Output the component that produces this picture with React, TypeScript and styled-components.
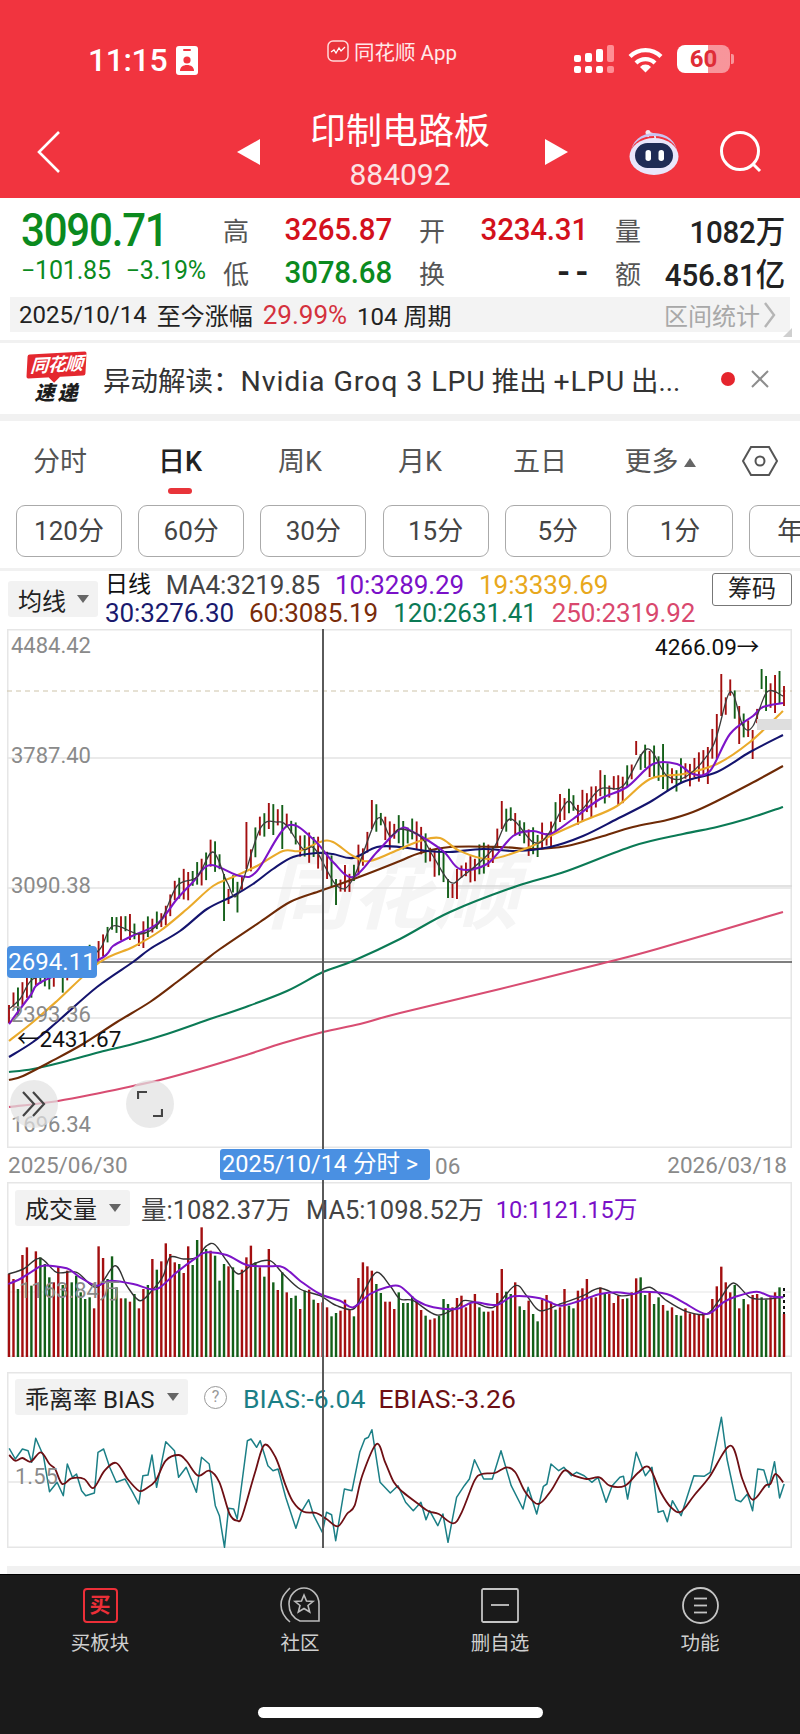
import React from "react";
import styled, { createGlobalStyle } from "styled-components";

const sans = `Roboto, "Noto Sans CJK SC", sans-serif`;
const red = "#d3111c";
const green = "#0b8a1e";

const GlobalStyle = createGlobalStyle`
  html, body { margin: 0; padding: 0; background: #fff; }
  * { box-sizing: border-box; }
  body { font-family: ${sans}; }
`;

const Page = styled.div`
  width: 800px;
  height: 1734px;
  overflow: hidden;
  display: flex;
  flex-direction: column;
  background: #fff;
`;

/* header */
const Header = styled.header`
  height: 198px;
  background: #f1343f;
  color: #fff;
`;
const StatusRow = styled.div`
  height: 105px;
  display: grid;
  grid-template-columns: 239px 132px 1fr;
  padding: 0 67px 0 88px;
`;
const StatusLeft = styled.div`
  display: flex;
  align-items: center;
  gap: 9px;
  height: 30px;
  margin-top: 45px;
`;
const Clock = styled.span`
  font-size: 32px;
  font-weight: 500;
  letter-spacing: -0.4px;
`;
const AppTag = styled.div`
  display: flex;
  align-items: center;
  gap: 5px;
  height: 24px;
  margin-top: 39px;
  font-size: 20.5px;
  white-space: nowrap;
  color: #ffe9ea;
`;
const StatusRight = styled.div`
  display: flex;
  align-items: center;
  justify-content: flex-end;
  gap: 14px;
  height: 30px;
  margin-top: 44px;
`;
const Battery = styled.div`
  position: relative;
  width: 53px;
  height: 28px;
  border-radius: 8px;
  background: linear-gradient(90deg, #fff 0 58%, rgba(255, 255, 255, 0.48) 58%);
  color: #df2c36;
  font-size: 24px;
  font-weight: 700;
  line-height: 28px;
  text-align: center;
  margin-right: 3px;
  &::after {
    content: "";
    position: absolute;
    right: -4px;
    top: 9px;
    width: 3px;
    height: 10px;
    border-radius: 0 2px 2px 0;
    background: rgba(255, 255, 255, 0.48);
  }
`;
const NavRow = styled.div`
  height: 93px;
  display: grid;
  grid-template-columns: 237px 23px 1fr 23px 232px;
  align-items: center;
`;
const BackCell = styled.div`
  padding-left: 37px;
  display: flex;
`;
const TitleBlock = styled.div`
  display: flex;
  flex-direction: column;
  align-items: center;
  margin-top: -2px;
  margin-right: 5px;
`;
const Title = styled.div`
  font-size: 36px;
  line-height: 46px;
  white-space: nowrap;
`;
const Code = styled.div`
  margin-top: 3px;
  font-size: 30px;
  line-height: 34px;
  color: #fbe3e4;
`;
const NavActions = styled.div`
  display: flex;
  align-items: center;
  gap: 41px;
  padding-left: 61px;
`;

/* quote */
const Quote = styled.section`
  height: 142px;
  display: flex;
  flex-direction: column;
`;
const QuoteTop = styled.div`
  height: 99px;
  display: flex;
`;
const PriceCol = styled.div`
  width: 223px;
  padding: 9px 0 0 21px;
  color: ${green};
`;
const Price = styled.div`
  font-size: 42px;
  line-height: 48px;
  font-weight: 500;
  letter-spacing: -1.2px;
  transform: scaleY(1.08);
`;
const Change = styled.div`
  display: flex;
  gap: 15px;
  margin-top: 2px;
  font-size: 25px;
  line-height: 28px;
  letter-spacing: -0.2px;
  white-space: nowrap;
`;
const StatGrid = styled.div`
  display: grid;
  grid-template-columns: 169px 169px 170px;
  grid-auto-rows: 28px;
  column-gap: 27px;
  row-gap: 15px;
  padding-top: 17px;
`;
const Stat = styled.div`
  display: flex;
  justify-content: space-between;
  align-items: center;
`;
const StatLabel = styled.span`
  font-size: 26px;
  color: #555;
`;
const StatValue = styled.span<{ $color: string; $spaced?: boolean }>`
  font-size: ${(p) => (p.$spaced ? "36px" : "29.5px")};
  font-weight: 500;
  color: ${(p) => p.$color};
  letter-spacing: ${(p) => (p.$spaced ? "6px" : "-0.2px")};
  margin-right: ${(p) => (p.$spaced ? "-6px" : "0")};
  transform: scaleY(1.08);
  white-space: nowrap;
`;
const RangeBar = styled.div`
  position: relative;
  height: 35px;
  margin: 0 10px;
  background: #f3f3f3;
  display: flex;
  align-items: center;
  gap: 10px;
  padding: 0 14px 0 9px;
  font-size: 24px;
  color: #222;
  white-space: nowrap;
`;
const RangePct = styled.span`
  color: #d4313d;
  font-size: 26px;
`;
const RangeStats = styled.span`
  margin-left: auto;
  display: flex;
  align-items: center;
  gap: 4px;
  color: #a8a8a8;
`;
const CornerMark = styled.div`
  position: absolute;
  right: -2px;
  bottom: -5px;
  width: 0;
  height: 0;
  border-left: 9px solid transparent;
  border-bottom: 9px solid #cfcfcf;
`;
const ThinGap = styled.div<{ $h: number; $bg: string }>`
  height: ${(p) => p.$h}px;
  background: ${(p) => p.$bg};
`;

/* news */
const News = styled.div`
  height: 71px;
  display: flex;
  align-items: center;
  padding-left: 26px;
`;
const Logo = styled.div`
  width: 60px;
  display: flex;
  flex-direction: column;
  align-items: center;
`;
const LogoTop = styled.div`
  position: relative;
  width: 59px;
  height: 24px;
  border-radius: 2px;
  background: #e4282f;
  transform: rotate(-3deg) skewX(-6deg);
  color: #fff;
  font-size: 18px;
  line-height: 24px;
  font-weight: 700;
  font-style: italic;
  text-align: center;
  letter-spacing: -0.5px;
  white-space: nowrap;
  &::after {
    content: "";
    position: absolute;
    left: 24px;
    bottom: -4px;
    width: 8px;
    height: 8px;
    background: #e4282f;
    transform: rotate(45deg);
  }
`;
const LogoBottom = styled.div`
  margin-top: 6px;
  font-size: 20px;
  line-height: 21px;
  font-weight: 900;
  font-style: italic;
  letter-spacing: 3px;
  margin-right: -3px;
  color: #1c1c1c;
`;
const NewsText = styled.div`
  width: 617px;
  margin-left: 17px;
  font-size: 27.5px;
  color: #333;
  white-space: nowrap;
  overflow: hidden;
`;
const Latin = styled.span`
  font-size: 28.5px;
  letter-spacing: 0.9px;
  margin-right: 6px;
`;
const Dot = styled.div`
  width: 14px;
  height: 14px;
  border-radius: 50%;
  background: #e5252d;
  margin-left: 1px;
`;
const Close = styled.div`
  margin-left: 16px;
  display: flex;
`;

/* tabs */
const Tabs = styled.div`
  height: 84px;
  display: grid;
  grid-template-columns: repeat(6, 120px) 1fr;
  padding-top: 25px;
`;
const Tab = styled.div<{ $active?: boolean }>`
  position: relative;
  display: flex;
  justify-content: center;
  gap: 5px;
  height: 32px;
  font-size: 27px;
  line-height: 32px;
  color: ${(p) => (p.$active ? "#222" : "#555")};
  font-weight: ${(p) => (p.$active ? 500 : 400)};
`;
const TabMark = styled.div`
  position: absolute;
  left: 48px;
  top: 42px;
  width: 24px;
  height: 6px;
  border-radius: 3px;
  background: #e8343a;
`;
const MoreCaret = styled.span`
  align-self: center;
  width: 0;
  height: 0;
  border-left: 6px solid transparent;
  border-right: 6px solid transparent;
  border-bottom: 9px solid #666;
`;
const SettingCell = styled.div`
  display: flex;
  padding-left: 22px;
`;
const Pills = styled.div`
  height: 52px;
  display: flex;
  gap: 16.2px;
  padding-left: 16px;
  overflow: hidden;
`;
const Pill = styled.div`
  flex: 0 0 106px;
  border: 1px solid #aaa;
  border-radius: 9px;
  font-size: 26px;
  line-height: 50px;
  text-align: center;
  color: #444;
`;
const EdgePill = styled(Pill)`
  text-align: left;
  padding-left: 27px;
`;

/* legend */
const Legend = styled.div`
  height: 58px;
  display: flex;
`;
const Selector = styled.div<{ $w: number }>`
  width: ${(p) => p.$w}px;
  height: 36px;
  display: flex;
  align-items: center;
  justify-content: space-between;
  padding: 0 9px 0 10px;
  background: #f2f2f2;
  border-radius: 3px;
  font-size: 24px;
  color: #222;
  white-space: nowrap;
`;
const Caret = styled.span`
  width: 0;
  height: 0;
  border-left: 6px solid transparent;
  border-right: 6px solid transparent;
  border-top: 8px solid #666;
`;
const LegendSelector = styled.div`
  margin: 10px 0 0 8px;
`;
const MaLines = styled.div`
  margin-left: 7px;
  width: 602px;
  display: flex;
  flex-direction: column;
`;
const MaRow = styled.div`
  display: flex;
  gap: 15px;
  height: 28px;
  font-size: 26px;
  line-height: 28px;
  white-space: nowrap;
  letter-spacing: -0.1px;
`;
const MaText = styled.span<{ $color: string }>`
  color: ${(p) => p.$color};
`;
const DayLabel = styled.span`
  font-size: 23px;
  color: #111;
`;
const ChipButton = styled.div`
  margin: 2px 0 0 5px;
  width: 80px;
  height: 33px;
  border: 1px solid #777;
  border-radius: 3px;
  font-size: 24px;
  line-height: 31px;
  text-align: center;
  color: #222;
`;

/* charts */
const ChartArea = styled.div`
  position: relative;
  height: 945px;
  padding-left: 7px;
`;
const Crosshair = styled.div`
  position: absolute;
  left: 322px;
  top: 0;
  bottom: 26px;
  width: 2px;
  background: #5a5a5a;
  z-index: 3;
`;
const MainFrame = styled.div`
  position: relative;
  width: 785px;
  height: 519px;
  box-shadow: inset 0 0 0 1.5px #e6e6e6;
`;
const Plot = styled.svg`
  position: absolute;
  inset: 0;
  display: block;
`;
const Watermark = styled.div`
  position: absolute;
  left: 260px;
  top: 220px;
  font-size: 84px;
  line-height: 90px;
  font-weight: 700;
  font-style: italic;
  color: #f5f5f5;
  white-space: nowrap;
`;
const AxisLabel = styled.span<{ $top: number; $left?: number }>`
  position: absolute;
  left: ${(p) => p.$left ?? 4}px;
  top: ${(p) => p.$top}px;
  font-size: 22px;
  line-height: 24px;
  color: #8a8a8a;
`;
const Extreme = styled.span<{ $top: number; $left: number }>`
  position: absolute;
  left: ${(p) => p.$left}px;
  top: ${(p) => p.$top}px;
  font-size: 22.5px;
  line-height: 24px;
  color: #111;
  white-space: nowrap;
`;
const PriceTag = styled.div`
  position: absolute;
  left: 0;
  top: 317px;
  width: 90px;
  height: 32px;
  background: #4a90e2;
  border-radius: 4px;
  color: #fff;
  font-size: 24px;
  line-height: 32px;
  text-align: center;
`;
const RoundButton = styled.div<{ $left: number }>`
  position: absolute;
  left: ${(p) => p.$left}px;
  top: 451px;
  width: 48px;
  height: 48px;
  border-radius: 50%;
  background: rgba(226, 226, 226, 0.72);
  display: flex;
  align-items: center;
  justify-content: center;
`;
const GreyFlag = styled.div`
  position: absolute;
  right: 0;
  top: 90px;
  width: 35px;
  height: 11px;
  background: #dedede;
`;
const DateRow = styled.div`
  position: relative;
  width: 785px;
  height: 34px;
  display: flex;
  align-items: center;
  justify-content: space-between;
  padding: 0 5px 0 1px;
  font-size: 22.5px;
  color: #8a8a8a;
`;
const DateTag = styled.div`
  position: absolute;
  left: 213px;
  top: 1px;
  width: 210px;
  height: 31px;
  padding-left: 2px;
  background: #4a90e2;
  border-radius: 3px;
  color: #fff;
  font-size: 23.5px;
  line-height: 31px;
  white-space: nowrap;
  z-index: 4;
`;
const DateStub = styled.span`
  position: absolute;
  left: 428px;
  top: 5px;
`;
const SubPanel = styled.div<{ $h: number; $mb: number }>`
  position: relative;
  width: 785px;
  height: ${(p) => p.$h}px;
  margin-bottom: ${(p) => p.$mb}px;
  box-shadow: inset 0 0 0 1.5px #e6e6e6;
`;
const PanelHead = styled.div`
  position: relative;
  display: flex;
  align-items: center;
  padding: 7px 0 0 8px;
  white-space: nowrap;
`;
const VolStat = styled.span<{ $color: string; $ml: number }>`
  font-size: 25.5px;
  color: ${(p) => p.$color};
  margin-left: ${(p) => p.$ml}px;
`;
const VolTenStat = styled(VolStat)`
  font-size: 23.6px;
`;
const BiasStat = styled(VolStat)`
  font-size: 26.5px;
  position: relative;
  top: 1px;
`;
const Help = styled.span`
  width: 23px;
  height: 23px;
  margin-left: 16px;
  border: 1.5px solid #999;
  border-radius: 50%;
  color: #999;
  font-size: 16px;
  line-height: 20px;
  text-align: center;
`;
const BottomGap = styled.div`
  height: 18px;
  background: #fff;
`;
const BottomRule = styled.div`
  height: 8px;
  background: #f1f1f1;
`;

/* bottom bar */
const TabBar = styled.nav`
  flex: 1;
  position: relative;
  background: #1a1a1a;
  border-top: 1px solid #000;
  display: grid;
  grid-template-columns: repeat(4, 200px);
  padding-top: 12px;
`;
const BarItem = styled.div`
  display: flex;
  flex-direction: column;
  align-items: center;
  height: 70px;
`;
const BarIcon = styled.div`
  height: 36px;
  display: flex;
  align-items: center;
  justify-content: center;
`;
const BuyIcon = styled.div`
  width: 35px;
  height: 35px;
  border: 2px solid #ec2f38;
  border-radius: 4px;
  color: #ec2f38;
  font-size: 21px;
  line-height: 31px;
  font-weight: 700;
  text-align: center;
`;
const BarLabel = styled.div`
  margin-top: 10px;
  font-size: 19.5px;
  line-height: 22px;
  color: #cfcfcf;
`;
const HomeBar = styled.div`
  position: absolute;
  left: 258px;
  top: 132px;
  width: 285px;
  height: 11px;
  border-radius: 6px;
  background: #fff;
`;

/* data */
type Pt = [number, number];

const ma4: Pt[] = [[9,1010],[20,1000],[33,980],[60,975],[80,965],[100,950],[113,927],[140,935],[160,923],[177,887],[197,878],[213,853],[227,883],[238,895],[260,830],[277,823],[287,827],[303,850],[315,850],[337,887],[353,880],[377,820],[390,837],[400,830],[420,837],[433,857],[450,883],[463,877],[493,850],[510,820],[533,843],[547,837],[567,803],[580,812],[600,790],[623,787],[647,750],[667,777],[687,777],[713,747],[730,693],[743,727],[753,727],[767,693],[783,697]];
const ma10: Pt[] = [[9,1025],[30,997],[43,982],[100,960],[113,947],[130,938],[157,925],[177,900],[193,883],[210,866],[240,877],[257,872],[287,827],[313,840],[333,863],[353,878],[377,853],[400,830],[413,833],[443,852],[460,870],[487,865],[513,837],[533,832],[550,835],[573,820],[600,800],[627,788],[653,765],[677,765],[693,775],[710,772],[730,735],[753,717],[763,708],[783,704]];
const ma19: Pt[] = [[9,1042],[33,1023],[57,1002],[100,963],[133,948],[160,932],[187,910],[213,887],[233,878],[257,867],[283,852],[300,852],[320,843],[333,843],[353,857],[370,862],[400,850],[420,842],[440,839],[460,852],[490,860],[530,848],[550,837],[583,822],[617,807],[650,780],[683,775],[717,765],[750,743],[783,712]];
const ma30: Pt[] = [[9,1058],[33,1043],[57,1023],[97,988],[133,963],[150,950],[180,932],[207,910],[233,897],[253,885],[273,870],[293,858],[317,854],[333,855],[353,859],[377,848],[400,848],[427,852],[450,853],[483,850],[517,852],[550,848],[583,837],[617,820],[650,803],[683,783],[717,773],[750,753],[783,736]];
const ma60: Pt[] = [[9,1081],[23,1077],[50,1063],[83,1045],[117,1023],[150,1003],[177,983],[203,963],[220,950],[260,923],[290,903],[320,892],[340,885],[367,875],[400,862],[420,854],[450,848],[500,848],[533,850],[567,847],[600,838],[633,828],[667,821],[693,813],[717,802],[750,785],[783,767]];
const ma120: Pt[] = [[9,1073],[33,1070],[67,1062],[100,1053],[133,1045],[167,1035],[213,1019],[243,1009],[287,992],[323,973],[353,962],[400,940],[450,913],[517,887],[567,872],[633,847],[683,835],[717,828],[750,819],[783,808]];
const ma250: Pt[] = [[9,1108],[58,1102],[100,1094],[133,1087],[160,1081],[200,1070],[243,1057],[283,1044],[323,1033],[360,1025],[400,1014],[500,990],[600,965],[657,950],[783,913]];

const volLeft = "R285 R300 G330 R228 R205 G320 R217 G235 G255 G295 R310 R262 G318 R275 G310 G290 G340 G360 G355 R388 R202 R237 G300 G232 G325 R358 G358 R368 G345 R388 R330 G318 R240 G272 R247 R193 R225 R250 G255 R282 R202 G258 G183 R145 G210 R215 G230 G305 G255 R262 G265 G333 R272 R235 R200 G250 R265 G293 R210 G310 R333 G280 R340 G357 G350 R390 G335 R332 G362 R372 R370 R385 G412 G402 R395 R362 R392 G412 R297 R250 R262 R275 G315 G342 R368 R368 R390 G340";
const volRight = "G372 G372 G352 R365 R393 G410 R422 R418 G410 G360 G375 R385 R357 R350 R385 R375 R345 G385 G398 R398 R395 R342 R270 G338 G345 R310 G382 G393 R365 G405 G427 R362 R348 R368 G392 R385 R330 G380 G388 R335 R328 R300 R355 R355 R325 G345 R345 R372 R350 R360 G358 R340 R298 G295 G348 R340 G375 G355 R378 G395 R385 G408 G410 R388 R403 R405 R405 R402 G418 R360 R322 R263 R310 R340 G318 R388 G360 R376 R348 R345 G355 G362 R355 R340 G325 R405";

const bars = `${volLeft} ${volRight}`.split(" ").map((s, i, all) => ({
  x: 9 + (i * (784 - 9)) / (all.length - 1),
  up: s[0] === "R",
  top: 1180 + Number(s.slice(1)) / 3,
}));

const volMa10: Pt[] = [
  ...[[25,315],[60,300],[100,275],[130,260],[200,268],[240,295],[290,320],[330,305],[400,315],[450,330],[480,325],[530,280],[590,235],[620,220],[680,228],[740,258],[800,262],[850,265],[900,305],[960,345],[1020,365],[1060,385],[1110,345],[1160,325],[1200,322]].map(([x, y]): Pt => [x / 3, 1180 + y / 3]),
  ...[[50,365],[100,385],[170,390],[220,370],[290,378],[340,352],[420,358],[480,380],[540,365],[600,345],[650,340],[700,345],[730,338],[800,345],[850,370],[920,405],[970,370],[1010,352],[1070,338],[1110,352],[1150,355]].map(([x, y]): Pt => [400 + x / 3, 1180 + y / 3]),
];
const volMa5: Pt[] = [
  ...[[25,285],[70,270],[120,238],[170,280],[230,280],[290,325],[345,260],[380,320],[420,365],[460,330],[490,290],[510,235],[550,240],[590,235],[620,200],[645,197],[680,245],[715,285],[760,255],[810,245],[850,285],[900,330],[960,350],[1010,380],[1060,390],[1090,340],[1130,280],[1170,320],[1200,360]].map(([x, y]): Pt => [x / 3, 1180 + y / 3]),
  ...[[40,365],[110,408],[170,385],[190,365],[220,368],[280,385],[345,320],[380,350],[420,395],[480,375],[510,365],[550,350],[600,328],[660,350],[700,345],[750,325],[800,365],[860,398],[920,405],[960,360],[1000,312],[1050,355],[1100,360],[1150,355]].map(([x, y]): Pt => [400 + x / 3, 1180 + y / 3]),
];

const biasPts: Pt[] = ([[18,238],[30,270],[44,240],[55,245],[62,280],[70,208],[85,260],[97,368],[112,340],[124,380],[132,285],[142,325],[150,315],[160,365],[168,380],[185,372],[192,250],[203,240],[215,295],[228,340],[245,330],[260,370],[272,405],[280,320],[290,318],[298,258],[307,355],[325,218],[342,245],[350,325],[365,295],[385,370],[395,265],[410,285],[422,410],[430,440],[440,535],[448,418],[458,420],[465,450],[485,215],[492,210],[503,235],[510,215],[525,290],[535,305],[545,300],[560,385],[580,478],[590,430],[605,392],[615,440],[632,490],[640,430],[650,437],[658,515],[675,360],[690,365],[705,250],[715,210],[722,205],[729,182],[745,340],[765,372],[780,350],[795,400],[810,425],[825,400],[835,452],[842,425],[858,470],[868,435],[878,520],[895,385],[910,350],[920,330],[930,272],[948,330],[965,330],[982,245],[1002,350],[1025,420],[1035,355],[1052,435],[1065,352],[1072,345],[1080,285],[1095,305],[1105,295],[1120,320],[1130,310],[1145,320],[1160,340],[1172,325],[1188,400],[1200,350],[1215,325],[1222,322],[1230,390],[1247,250],[1265,320],[1278,295],[1290,430],[1300,425],[1308,458],[1318,395],[1335,440],[1360,320],[1380,322],[1392,310],[1414,145],[1425,270],[1442,392],[1452,398],[1465,375],[1475,425],[1485,300],[1497,303],[1507,355],[1518,278],[1528,387],[1537,345]] as Pt[]).map(([x, y]): Pt => [x / 1.96, 1370 + y / 3]);
const ebiasPts: Pt[] = ([[18,258],[30,275],[44,267],[60,278],[80,250],[97,285],[108,300],[122,345],[140,328],[165,330],[183,357],[205,305],[228,282],[250,330],[272,365],[285,360],[305,335],[325,275],[350,258],[365,275],[388,320],[410,305],[430,340],[450,435],[465,455],[475,440],[500,310],[518,228],[540,265],[560,350],[575,400],[595,428],[620,432],[640,450],[662,472],[680,435],[695,410],[710,320],[738,225],[755,280],[772,340],[790,370],[820,405],[840,427],[860,435],[888,463],[905,430],[930,335],[945,315],[970,312],[993,295],[1010,310],[1030,370],[1055,405],[1080,365],[1105,305],[1125,320],[1150,330],[1175,325],[1195,350],[1225,350],[1250,312],[1272,295],[1295,370],[1315,415],[1335,428],[1360,380],[1390,325],[1432,230],[1455,330],[1475,392],[1500,350],[1510,345],[1520,315],[1535,340]] as Pt[]).map(([x, y]): Pt => [x / 1.96, 1370 + y / 3]);

const line = (pts: Pt[]) => pts.map(([x, y]) => `${x.toFixed(1)},${y.toFixed(1)}`).join(" ");

// moving averages are smooth in the picture, so run a spline through the read-off points
const smooth = (pts: Pt[]) => {
  let d = `M${pts[0][0]} ${pts[0][1]}`;
  for (let i = 0; i < pts.length - 1; i++) {
    const p0 = pts[Math.max(i - 1, 0)];
    const p1 = pts[i];
    const p2 = pts[i + 1];
    const p3 = pts[Math.min(i + 2, pts.length - 1)];
    const c1x = p1[0] + (p2[0] - p0[0]) / 6;
    const c1y = p1[1] + (p2[1] - p0[1]) / 6;
    const c2x = p2[0] - (p3[0] - p1[0]) / 6;
    const c2y = p2[1] - (p3[1] - p1[1]) / 6;
    d += `C${c1x.toFixed(1)} ${c1y.toFixed(1)} ${c2x.toFixed(1)} ${c2y.toFixed(1)} ${p2[0].toFixed(1)} ${p2[1].toFixed(1)}`;
  }
  return d;
};

const yAt = (pts: Pt[], x: number) => {
  for (let i = 1; i < pts.length; i++) {
    if (x <= pts[i][0]) {
      const [x0, y0] = pts[i - 1];
      const [x1, y1] = pts[i];
      return y0 + ((y1 - y0) * (x - x0)) / (x1 - x0);
    }
  }
  return pts[pts.length - 1][1];
};

const noise = (n: number) => {
  const v = Math.sin(n * 12.9898) * 43758.5453;
  return v - Math.floor(v);
};

// the long wicks that stand out, read off the picture
const wicks: [number, number, number, boolean][] = [
  [722, 675, 717, true], [762, 670, 690, false], [767, 677, 712, false], [775, 676, 714, true],
  [779, 672, 705, false], [784, 687, 707, true], [753, 731, 760, true], [739, 707, 745, true],
  [502, 802, 830, true], [448, 880, 899, false], [453, 885, 899, true], [336, 880, 906, false],
  [372, 801, 830, true], [268, 804, 830, true], [283, 806, 850, false], [224, 875, 922, false],
  [228, 890, 905, true], [247, 823, 870, true], [636, 742, 756, true], [650, 746, 770, false],
  [649, 752, 778, true], [663, 745, 790, false], [719, 715, 760, true], [706, 748, 785, true],
];

const candles = bars.map((b, i) => {
  const mid = yAt(ma4, b.x) + (noise(i + 1) - 0.5) * 12;
  const len = 12 + noise(i + 50) * 20;
  return { x: b.x, up: b.up, y1: mid - len / 2, y2: mid + len / 2 };
});
wicks.forEach(([x, y1, y2, up]) => {
  let best = 0;
  candles.forEach((c, i) => {
    if (Math.abs(c.x - x) < Math.abs(candles[best].x - x)) best = i;
  });
  candles[best] = { x: candles[best].x, up, y1, y2 };
});

const barRed = "#a30f10";
const barGreen = "#135f18";

const maSeries: [Pt[], string, number][] = [
  [ma250, "#d84d72", 2.1],
  [ma120, "#0b7a55", 2.1],
  [ma60, "#6e2a06", 2.1],
  [ma30, "#14146e", 2.1],
  [ma19, "#eaaa2a", 2.1],
  [ma10, "#7d14c8", 2.1],
  [ma4, "#3c3c3c", 1.3],
];

const MainPlot = () => (
  <Plot width="785" height="519" viewBox="7 630 785 519">
    {[759, 889, 1019].map((y) => (
      <line key={y} x1="7" x2="792" y1={y} y2={y} stroke="#e3e3e3" strokeWidth={1.3} />
    ))}
    <line x1="458" x2="792" y1="887" y2="887" stroke="#d8d8d8" strokeWidth={1.5} />
    <line x1="7" x2="792" y1="692" y2="692" stroke="#cdc4a9" strokeWidth={1.2} strokeDasharray="5 4" />
    <line x1="7" x2="792" y1="960" y2="960" stroke="#dedede" strokeWidth={1.5} />
    <line x1="7" x2="792" y1="963" y2="963" stroke="#555" strokeWidth={1.6} />
    {candles.map((c, i) => (
      <line key={i} x1={c.x} x2={c.x} y1={c.y1} y2={c.y2} stroke={c.up ? barRed : barGreen} strokeWidth={1.9} />
    ))}
    {maSeries.map(([pts, color, w]) => (
      <path key={color} d={smooth(pts)} fill="none" stroke={color} strokeWidth={w} strokeLinejoin="round" />
    ))}
  </Plot>
);

const VolumePlot = () => (
  <Plot width="785" height="175" viewBox="7 1183 785 175">
    <line x1="7" x2="792" y1="1293" y2="1293" stroke="#e6e6e6" strokeWidth={1.2} />
    {bars.map((b, i) => (
      <rect key={i} x={b.x - 1.2} y={b.top} width="2.4" height={1358 - b.top} fill={b.up ? barRed : barGreen} />
    ))}
    <line x1="784" x2="784" y1="1289" y2="1315" stroke="#111" strokeWidth={2} strokeDasharray="3 3" />
    <path d={smooth(volMa5)} fill="none" stroke="#333" strokeWidth={1.4} />
    <path d={smooth(volMa10)} fill="none" stroke="#7d14c8" strokeWidth={2} />
  </Plot>
);

const BiasPlot = () => (
  <Plot width="785" height="176" viewBox="7 1373 785 176">
    <line x1="7" x2="792" y1="1483" y2="1483" stroke="#e6e6e6" strokeWidth={1.3} />
    <polyline points={line(biasPts)} fill="none" stroke="#1b7f86" strokeWidth={1.5} strokeLinejoin="round" />
    <path d={smooth(ebiasPts)} fill="none" stroke="#6e0f14" strokeWidth={1.8} />
  </Plot>
);

/* icons */
const IdIcon = () => (
  <svg width="22" height="29" viewBox="0 0 22 29">
    <rect width="22" height="29" rx="3" fill="#fff" />
    <rect x="7" y="3" width="8" height="2" rx="1" fill="#f1343f" />
    <circle cx="11" cy="14" r="3.6" fill="#f1343f" />
    <path d="M4 25c0-4 3-6 7-6s7 2 7 6z" fill="#f1343f" />
  </svg>
);
const AppIcon = () => (
  <svg width="22" height="22" viewBox="0 0 22 22">
    <rect x="1" y="1" width="20" height="20" rx="5" fill="#e8323a" stroke="#ffd9da" strokeWidth="1.5" />
    <polyline points="4,12 7,10 9,13 12,8 14,11 18,7" fill="none" stroke="#fff" strokeWidth="1.3" />
  </svg>
);
const SignalIcon = () => (
  <svg width="41" height="28" viewBox="0 0 41 28">
    <rect x="1" y="10" width="7" height="7" rx="2" fill="#fff" />
    <rect x="12" y="8" width="7" height="9" rx="2" fill="#fff" />
    <rect x="23" y="4" width="7" height="13" rx="2" fill="#fff" />
    <rect x="34" y="0" width="7" height="17" rx="2" fill="#ff8e94" />
    {[1, 12, 23].map((x) => (
      <rect key={x} x={x} y="21" width="7" height="7" rx="2" fill="#fff" />
    ))}
    <rect x="34" y="21" width="7" height="7" rx="2" fill="#ff8e94" />
  </svg>
);
const WifiIcon = () => (
  <svg width="35" height="27" viewBox="0 0 35 27" fill="none" stroke="#fff" strokeWidth="4.2">
    <path d="M2 10.5a22 22 0 0 1 31 0" />
    <path d="M8 17a13.5 13.5 0 0 1 19 0" />
    <path d="M17.5 26.5l-5.5-5.5a7.5 7.5 0 0 1 11 0z" fill="#fff" stroke="none" />
  </svg>
);
const BackIcon = () => (
  <svg width="23" height="42" viewBox="0 0 23 42" fill="none" stroke="#fff" strokeWidth="2.6">
    <polyline points="22,1 2,21 22,41" />
  </svg>
);
const Triangle = ({ flip }: { flip?: boolean }) => (
  <svg width="23" height="26" viewBox="0 0 23 26">
    <polygon points={flip ? "0,0 23,13 0,26" : "23,0 0,13 23,26"} fill="#fff" />
  </svg>
);
const RobotIcon = () => (
  <svg width="50" height="46" viewBox="0 0 50 46">
    <path d="M19 8q0-5 4-3.5t3 6" stroke="#f3e9ee" strokeWidth="1.8" fill="none" />
    <circle cx="19" cy="3.5" r="2.5" fill="#f3e9ee" />
    <ellipse cx="25" cy="27.5" rx="24.5" ry="18.5" fill="#e9e6fb" />
    <path d="M2 24a23 17 0 0 1 46 0a23 20 0 0 0-46 0z" fill="#c9c4f1" />
    <rect x="6" y="14" width="38" height="25" rx="12.5" fill="#1f2b55" />
    <rect x="16.5" y="21" width="5.5" height="11" rx="2.7" fill="#fff" />
    <rect x="29.5" y="21" width="5.5" height="11" rx="2.7" fill="#fff" />
  </svg>
);
const SearchIcon = () => (
  <svg width="42" height="42" viewBox="0 0 42 42" fill="none" stroke="#fff" strokeWidth="3">
    <circle cx="20" cy="20" r="18.5" />
    <line x1="33" y1="33" x2="40" y2="40" />
  </svg>
);
const ChevronRight = ({ color }: { color: string }) => (
  <svg width="12" height="26" viewBox="0 0 12 26" fill="none" stroke={color} strokeWidth="2.4">
    <polyline points="1,1 10,13 1,25" />
  </svg>
);
const CloseIcon = () => (
  <svg width="18" height="18" viewBox="0 0 18 18" stroke="#8d8d8d" strokeWidth="2">
    <line x1="1" y1="1" x2="17" y2="17" />
    <line x1="17" y1="1" x2="1" y2="17" />
  </svg>
);
const HexIcon = () => (
  <svg width="36" height="30" viewBox="0 0 36 30" fill="none" stroke="#555" strokeWidth="2">
    <polygon points="9,1 27,1 35,15 27,29 9,29 1,15" />
    <circle cx="18" cy="15" r="4.5" />
  </svg>
);
const FastIcon = () => (
  <svg width="24" height="26" viewBox="0 0 24 26" fill="none" stroke="#444" strokeWidth="2.2">
    <polyline points="1,1 12,13 1,25" />
    <polyline points="11,1 22,13 11,25" />
  </svg>
);
const ExpandIcon = () => (
  <svg width="26" height="26" viewBox="0 0 26 26" fill="none" stroke="#444" strokeWidth="2.2">
    <polyline points="1,8 1,1 10,1" />
    <polyline points="25,18 25,25 16,25" />
  </svg>
);
const CommunityIcon = () => (
  <svg width="40" height="36" viewBox="0 0 40 36" fill="none" stroke="#bcbcbc" strokeWidth="1.6">
    <path d="M10 1C3 8 1 12 1 18s2 11 9 17" />
    <path d="M39 34V17C39 8 32 1 24 1S9 8 9 17s4 14 11 17z" />
    <polygon points="24,8 26.5,14 33,14.5 28,18.5 29.7,25 24,21.5 18.3,25 20,18.5 15,14.5 21.5,14" />
  </svg>
);
const WatchIcon = () => (
  <svg width="38" height="35" viewBox="0 0 38 35" fill="none" stroke="#c4c4c4" strokeWidth="1.8">
    <rect x="1" y="1" width="36" height="33" rx="1.5" />
    <line x1="10" y1="17" x2="28" y2="17" />
  </svg>
);
const MenuIcon = () => (
  <svg width="37" height="37" viewBox="0 0 37 37" fill="none" stroke="#c4c4c4" strokeWidth="1.8">
    <circle cx="18.5" cy="18.5" r="17.5" />
    <line x1="12" y1="11.5" x2="25" y2="11.5" />
    <line x1="12" y1="18.5" x2="25" y2="18.5" />
    <line x1="12" y1="25.5" x2="25" y2="25.5" />
  </svg>
);

const stats = [
  ["高", "3265.87", red],
  ["开", "3234.31", red],
  ["量", "1082万", "#222"],
  ["低", "3078.68", green],
  ["换", "--", "#222"],
  ["额", "456.81亿", "#222"],
];

const App = () => (
  <Page>
    <GlobalStyle />
    <Header>
      <StatusRow>
        <StatusLeft>
          <Clock>11:15</Clock>
          <IdIcon />
        </StatusLeft>
        <AppTag>
          <AppIcon />
          同花顺 App
        </AppTag>
        <StatusRight>
          <SignalIcon />
          <WifiIcon />
          <Battery>60</Battery>
        </StatusRight>
      </StatusRow>
      <NavRow>
        <BackCell>
          <BackIcon />
        </BackCell>
        <Triangle />
        <TitleBlock>
          <Title>印制电路板</Title>
          <Code>884092</Code>
        </TitleBlock>
        <Triangle flip />
        <NavActions>
          <RobotIcon />
          <SearchIcon />
        </NavActions>
      </NavRow>
    </Header>

    <Quote>
      <QuoteTop>
        <PriceCol>
          <Price>3090.71</Price>
          <Change>
            <span>−101.85</span>
            <span>−3.19%</span>
          </Change>
        </PriceCol>
        <StatGrid>
          {stats.map(([label, value, color]) => (
            <Stat key={label}>
              <StatLabel>{label}</StatLabel>
              <StatValue $color={color} $spaced={value === "--"}>{value}</StatValue>
            </Stat>
          ))}
        </StatGrid>
      </QuoteTop>
      <RangeBar>
        <span>2025/10/14</span>
        <span>至今涨幅</span>
        <RangePct>29.99%</RangePct>
        <span>104 周期</span>
        <RangeStats>
          区间统计
          <ChevronRight color="#b5b5b5" />
        </RangeStats>
        <CornerMark />
      </RangeBar>
    </Quote>
    <ThinGap $h={3} $bg="#f1f1f1" />

    <News>
      <Logo>
        <LogoTop>同花顺</LogoTop>
        <LogoBottom>速递</LogoBottom>
      </Logo>
      <NewsText>
        异动解读：<Latin>Nvidia Groq 3 LPU</Latin>推出 <Latin>+LPU</Latin>出...
      </NewsText>
      <Dot />
      <Close>
        <CloseIcon />
      </Close>
    </News>
    <ThinGap $h={7} $bg="#f1f1f1" />

    <Tabs>
      <Tab>分时</Tab>
      <Tab $active>
        日K
        <TabMark />
      </Tab>
      <Tab>周K</Tab>
      <Tab>月K</Tab>
      <Tab>五日</Tab>
      <Tab>
        更多
        <MoreCaret />
      </Tab>
      <SettingCell>
        <HexIcon />
      </SettingCell>
    </Tabs>
    <Pills>
      {["120分", "60分", "30分", "15分", "5分", "1分"].map((t) => (
        <Pill key={t}>{t}</Pill>
      ))}
      <EdgePill>年</EdgePill>
    </Pills>
    <ThinGap $h={11} $bg="#fff" />
    <ThinGap $h={3} $bg="#f1f1f1" />

    <Legend>
      <LegendSelector>
        <Selector $w={90}>
          均线
          <Caret />
        </Selector>
      </LegendSelector>
      <MaLines>
        <MaRow>
          <DayLabel>日线</DayLabel>
          <MaText $color="#444">MA4:3219.85</MaText>
          <MaText $color="#7a10c8">10:3289.29</MaText>
          <MaText $color="#e8a81c">19:3339.69</MaText>
        </MaRow>
        <MaRow>
          <MaText $color="#1a1a6e">30:3276.30</MaText>
          <MaText $color="#7a2c0a">60:3085.19</MaText>
          <MaText $color="#0b7a55">120:2631.41</MaText>
          <MaText $color="#d9486e">250:2319.92</MaText>
        </MaRow>
      </MaLines>
      <ChipButton>筹码</ChipButton>
    </Legend>

    <ChartArea>
      <Crosshair />
      <MainFrame>
        <Watermark>同花顺</Watermark>
        <MainPlot />
        <AxisLabel $top={5}>4484.42</AxisLabel>
        <AxisLabel $top={115}>3787.40</AxisLabel>
        <AxisLabel $top={245}>3090.38</AxisLabel>
        <AxisLabel $top={374}>2393.36</AxisLabel>
        <AxisLabel $top={484}>1696.34</AxisLabel>
        <Extreme $top={6} $left={648}>4266.09→</Extreme>
        <Extreme $top={398} $left={10}>←2431.67</Extreme>
        <GreyFlag />
        <PriceTag>2694.11</PriceTag>
        <RoundButton $left={3}>
          <FastIcon />
        </RoundButton>
        <RoundButton $left={119}>
          <ExpandIcon />
        </RoundButton>
      </MainFrame>
      <DateRow>
        <span>2025/06/30</span>
        <DateTag>2025/10/14 分时 &gt;</DateTag>
        <DateStub>06</DateStub>
        <span>2026/03/18</span>
      </DateRow>
      <SubPanel $h={175} $mb={15}>
        <VolumePlot />
        <AxisLabel $top={97} $left={12}>1163.84万</AxisLabel>
        <PanelHead>
          <Selector $w={115}>
            成交量
            <Caret />
          </Selector>
          <VolStat $color="#444" $ml={11}>量:1082.37万</VolStat>
          <VolStat $color="#444" $ml={15}>MA5:1098.52万</VolStat>
          <VolTenStat $color="#7a10c8" $ml={12}>10:1121.15万</VolTenStat>
        </PanelHead>
      </SubPanel>
      <SubPanel $h={176} $mb={0}>
        <BiasPlot />
        <AxisLabel $top={93} $left={8}>1.55</AxisLabel>
        <PanelHead>
          <Selector $w={173}>
            乖离率 BIAS
            <Caret />
          </Selector>
          <Help>?</Help>
          <BiasStat $color="#1b7f86" $ml={16}>BIAS:-6.04</BiasStat>
          <BiasStat $color="#6e0f14" $ml={13}>EBIAS:-3.26</BiasStat>
        </PanelHead>
      </SubPanel>
      <BottomGap />
      <BottomRule />
    </ChartArea>

    <TabBar>
      <BarItem>
        <BarIcon>
          <BuyIcon>买</BuyIcon>
        </BarIcon>
        <BarLabel>买板块</BarLabel>
      </BarItem>
      <BarItem>
        <BarIcon>
          <CommunityIcon />
        </BarIcon>
        <BarLabel>社区</BarLabel>
      </BarItem>
      <BarItem>
        <BarIcon>
          <WatchIcon />
        </BarIcon>
        <BarLabel>删自选</BarLabel>
      </BarItem>
      <BarItem>
        <BarIcon>
          <MenuIcon />
        </BarIcon>
        <BarLabel>功能</BarLabel>
      </BarItem>
      <HomeBar />
    </TabBar>
  </Page>
);

export default App;
